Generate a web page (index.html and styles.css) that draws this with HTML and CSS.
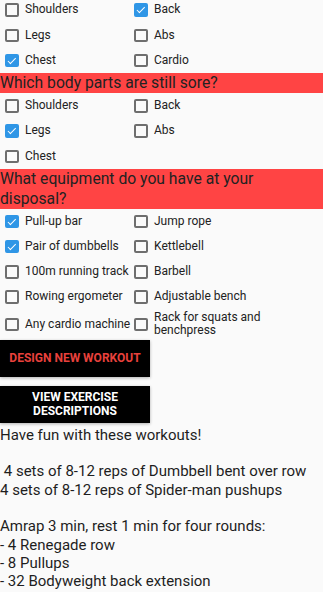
FILE: index.html
```html
<!DOCTYPE html>
<html lang="en">
<head>
    <meta charset="UTF-8">
    <meta name="viewport" content="width=device-width, initial-scale=1.0">
    <title>Workout Designer</title>
    <link rel="stylesheet" href="styles.css">
</head>
<body>

    <div class="screen">
        <div class="check-grid top-grid">
            <label class="check"><span class="box"></span><span class="check-text">Shoulders</span></label>
            <label class="check"><span class="box checked"></span><span class="check-text">Back</span></label>
            <label class="check"><span class="box"></span><span class="check-text">Legs</span></label>
            <label class="check"><span class="box"></span><span class="check-text">Abs</span></label>
            <label class="check"><span class="box checked"></span><span class="check-text">Chest</span></label>
            <label class="check"><span class="box"></span><span class="check-text">Cardio</span></label>
        </div>

        <div class="section-title">Which body parts are still sore?</div>
        <div class="check-grid">
            <label class="check"><span class="box"></span><span class="check-text">Shoulders</span></label>
            <label class="check"><span class="box"></span><span class="check-text">Back</span></label>
            <label class="check"><span class="box checked"></span><span class="check-text">Legs</span></label>
            <label class="check"><span class="box"></span><span class="check-text">Abs</span></label>
            <label class="check"><span class="box"></span><span class="check-text">Chest</span></label>
        </div>

        <div class="section-title">What equipment do you have at your disposal?</div>
        <div class="check-grid">
            <label class="check"><span class="box checked"></span><span class="check-text">Pull-up bar</span></label>
            <label class="check"><span class="box"></span><span class="check-text">Jump rope</span></label>
            <label class="check"><span class="box checked"></span><span class="check-text">Pair of dumbbells</span></label>
            <label class="check"><span class="box"></span><span class="check-text">Kettlebell</span></label>
            <label class="check"><span class="box"></span><span class="check-text">100m running track</span></label>
            <label class="check"><span class="box"></span><span class="check-text">Barbell</span></label>
            <label class="check"><span class="box"></span><span class="check-text">Rowing ergometer</span></label>
            <label class="check"><span class="box"></span><span class="check-text">Adjustable bench</span></label>
            <label class="check"><span class="box"></span><span class="check-text">Any cardio machine</span></label>
            <label class="check"><span class="box"></span><span class="check-text wrap">Rack for squats and benchpress</span></label>
        </div>

        <div class="buttons">
            <button class="btn btn-design">Design new workout</button>
            <button class="btn btn-view">View exercise<br>descriptions</button>
        </div>

        <div class="workouts">Have fun with these workouts!

 4 sets of 8-12 reps of Dumbbell bent over row
4 sets of 8-12 reps of Spider-man pushups

Amrap 3 min, rest 1 min for four rounds:
- 4 Renegade row
- 8 Pullups
- 32 Bodyweight back extension</div>
    </div>

</body>
</html>
```

FILE: styles.css
```css
* {
    margin: 0;
    padding: 0;
    box-sizing: border-box;
    font-family: "Roboto", "Liberation Sans", sans-serif;
}

body {
    background: #fafafa;
    color: #212121;
    height: 100vh;
    overflow: hidden;
}

.top-grid {
    margin-top: -2.5px;
}

.check-grid {
    display: grid;
    grid-template-columns: 129px 1fr;
}

.check {
    display: flex;
    align-items: center;
    min-height: 25.3px;
    padding-left: 5px;
    font-size: 12px;
    line-height: 13.5px;
    color: #222;
}

.box {
    flex: none;
    width: 13.5px;
    height: 13.5px;
    border: 2px solid #6e6e6e;
    border-radius: 2px;
    margin-right: 6.5px;
    position: relative;
}

.box.checked {
    background: #2f96e6;
    border-color: #2f96e6;
}

.box.checked::after {
    content: "";
    position: absolute;
    left: 3px;
    top: 0px;
    width: 3px;
    height: 6.5px;
    border: solid #fff;
    border-width: 0 1.6px 1.6px 0;
    transform: rotate(45deg);
}

.check-text {
    white-space: nowrap;
}

.check-text.wrap {
    white-space: normal;
    padding: 1px 0;
}

.section-title {
    background: #ff4444;
    color: #222;
    font-size: 15.7px;
    line-height: 19.8px;
}

.buttons {
    display: flex;
    flex-direction: column;
    gap: 9px;
    margin-top: 1px;
}

.btn {
    width: 150px;
    height: 37px;
    background: #000;
    border: none;
    font-size: 12px;
    font-weight: bold;
    line-height: 14px;
    text-transform: uppercase;
    box-shadow: 0 1px 3px rgba(0, 0, 0, 0.3);
}

.btn-design {
    color: #e8413c;
}

.btn-view {
    color: #fff;
}

.workouts {
    white-space: pre-wrap;
    font-size: 15px;
    line-height: 18.3px;
    margin-top: 3px;
    color: #1e1e1e;
}
```
